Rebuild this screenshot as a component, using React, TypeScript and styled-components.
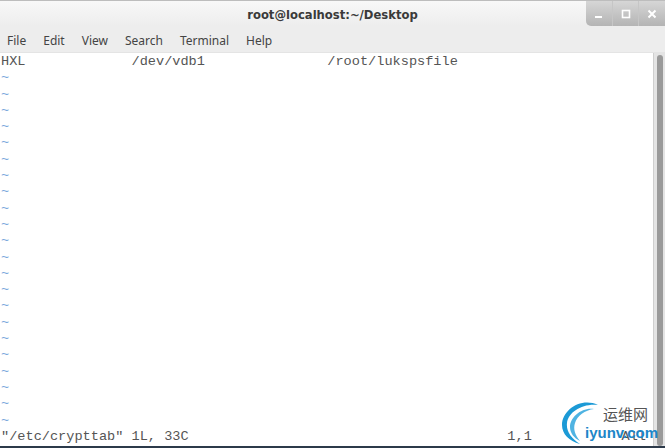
import React from 'react'
import styled, { createGlobalStyle } from 'styled-components'

const GlobalStyle = createGlobalStyle`
html, body {
  margin: 0;
  padding: 0;
  background: #fff;
}
`

const MENU = ['File', 'Edit', 'View', 'Search', 'Terminal', 'Help']
const TILDE_COUNT = 22

export default function App() {
  return (
    <>
      <GlobalStyle />
      <Window>
        <TitleBar>
          <Title>root@localhost:~/Desktop</Title>
          <WindowButtons>
            <WindowButton>
              <svg width="10" height="10" viewBox="0 0 10 10"><rect x="1" y="7" width="7" height="2" fill="#fff" /></svg>
            </WindowButton>
            <WindowButton>
              <svg width="10" height="10" viewBox="0 0 10 10"><rect x="1.5" y="1.5" width="7" height="7" fill="none" stroke="#fff" strokeWidth="1.6" /></svg>
            </WindowButton>
            <WindowButton>
              <svg width="10" height="10" viewBox="0 0 10 10"><path d="M1.5 1.5 L8.5 8.5 M8.5 1.5 L1.5 8.5" stroke="#fff" strokeWidth="2" /></svg>
            </WindowButton>
          </WindowButtons>
        </TitleBar>
        <MenuBar>
          {MENU.map((m) => <MenuItem key={m}>{m}</MenuItem>)}
        </MenuBar>
        <Body>
          <Terminal>
            <Line>{'HXL             /dev/vdb1               /root/lukspsfile'}</Line>
            {Array.from({ length: TILDE_COUNT }).map((_, i) => <Tilde key={i}>~</Tilde>)}
            <StatusLine>
              <span>"/etc/crypttab" 1L, 33C</span>
              <StatusRight>{'1,1           All'}</StatusRight>
            </StatusLine>
          </Terminal>
          <ScrollTrack><ScrollThumb /></ScrollTrack>
          <Watermark>
            <svg width="42" height="46" viewBox="0 0 42 46">
              <path d="M37 5 C20 -3 1 10 1 25 C1 34 8 41 19 44 C10 38 5 31 6 23 C7 12 22 3 37 5 Z" fill="#1c9ad6" />
              <path d="M33 9 C21 7 9 17 9 27 C9 33 13 38 19 41 C14 35 12 29 14 23 C16 16 24 10 33 9 Z" fill="#4fb3e2" />
            </svg>
            <WatermarkCn>运维网</WatermarkCn>
            <WatermarkEn>iyunv.com</WatermarkEn>
          </Watermark>
        </Body>
        <BottomEdge />
      </Window>
    </>
  )
}

const Window = styled.div`
width: 665px;
height: 448px;
display: flex;
flex-direction: column;
overflow: hidden;
background: #fff;
`

const TitleBar = styled.div`
height: 26px;
flex: none;
position: relative;
display: flex;
align-items: center;
justify-content: center;
border-top: 1px solid #bdbdbd;
box-sizing: border-box;
background: linear-gradient(to bottom, #f8f8f8, #ededed);
`

const Title = styled.div`
font: bold 11.6px "DejaVu Sans", sans-serif;
color: #3a3a3a;
margin-top: 2px;
`

const WindowButtons = styled.div`
position: absolute;
top: 0;
right: 0;
width: 79px;
height: 25px;
display: flex;
border-bottom-left-radius: 5px;
overflow: hidden;
background: linear-gradient(to bottom, #d6d6d6, #b4b4b4);
`

const WindowButton = styled.div`
flex: 1;
display: flex;
align-items: center;
justify-content: center;
border-left: 1px solid #c6c6c6;
&:first-child { border-left: none; }
`

const MenuBar = styled.div`
height: 27px;
flex: none;
display: flex;
align-items: center;
gap: 17px;
padding: 3px 0 0 7px;
box-sizing: border-box;
background: #ededed;
font: 12px "Noto Sans", sans-serif;
color: #444;
border-bottom: 1px solid #e4e4e4;
`

const MenuItem = styled.span``

const Body = styled.div`
flex: 1;
display: flex;
position: relative;
min-height: 0;
`

const Terminal = styled.div`
flex: 1;
padding: 1px 0 0 1px;
font: 13.6px/16.3px "Liberation Mono", "DejaVu Sans Mono", monospace;
color: #555;
white-space: pre;
display: flex;
flex-direction: column;
`

const Line = styled.div`
height: 16.3px;
`

const Tilde = styled(Line)`
color: #7aa6dc;
`

const StatusLine = styled(Line)`
display: flex;
justify-content: space-between;
`

const StatusRight = styled.span`
padding-right: 7px;
`

const ScrollTrack = styled.div`
width: 12px;
flex: none;
padding: 2px 2px 0 3px;
box-sizing: border-box;
background: #e4e4e4;
border-left: 1px solid #cfcfcf;
`

const ScrollThumb = styled.div`
width: 6px;
height: 100%;
border-radius: 3px;
background: #9a9a9a;
`

const BottomEdge = styled.div`
height: 2px;
flex: none;
background: #2c3a4a;
`

const Watermark = styled.div`
position: absolute;
left: 561px;
bottom: 0;
width: 100px;
height: 46px;
`

const WatermarkCn = styled.div`
position: absolute;
left: 42px;
top: 3px;
font: 15px "Noto Sans CJK SC", sans-serif;
color: #555;
`

const WatermarkEn = styled.div`
position: absolute;
left: 24px;
top: 24px;
font: bold 15px "Liberation Sans", sans-serif;
color: #1c86c8;
`
